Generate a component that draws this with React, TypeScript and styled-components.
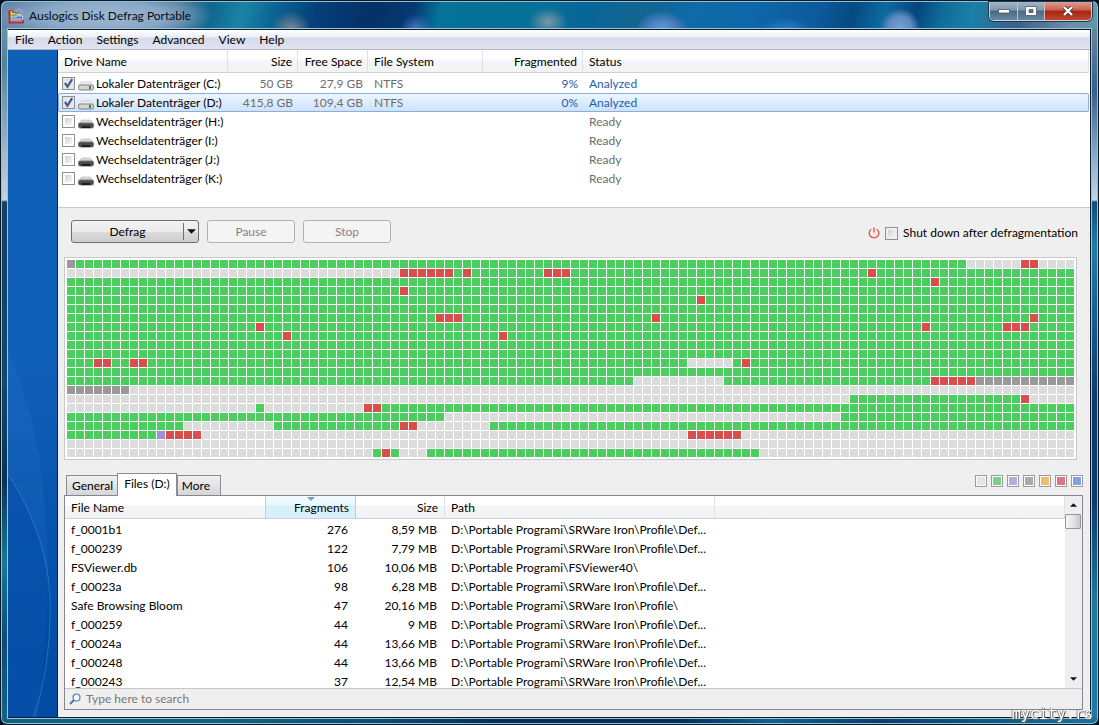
import React from "react";
import styled, { createGlobalStyle } from "styled-components";

const Global = createGlobalStyle`
  * { box-sizing: border-box; }
  html, body { margin: 0; height: 100%; }
  body {
    background: #04121f;
    font-family: Lato, "Open Sans", sans-serif;
    font-size: 12px;
    line-height: 18px;
    color: #000;
  }
  button, input { font: inherit; color: inherit; }
  ul { list-style: none; margin: 0; padding: 0; }
  table { border-collapse: separate; border-spacing: 0; }
`;

const WindowFrame = styled.div`
  display: flex;
  flex-direction: column;
  height: 100vh;
  min-height: 600px;
  padding: 0 7px 6px;
  border: 1px solid #061826;
  border-radius: 7px;
  box-shadow: inset 0 0 0 1px #8fc3d4;
  overflow: hidden;
  background:
    linear-gradient(90deg, #12617f 0, #12617f 20%, #0f4a72 35%, #072c5c 45%, #072c5c 62%, #14628c 70%, #0b3d6d 80%, #1a7196 100%) bottom / 100% 7px no-repeat,
    linear-gradient(180deg, #7fa3bd 0, #53819c 60px, #a9bccb 160px, #c3d3e0 199px, #123f66 201px, #10496a 380px, #0b3354 480px, #157a93 560px, #0d4c74 640px, #146487 100%) left / 8px 100% no-repeat,
    linear-gradient(180deg, #6fa2ae 0, #63869f 30px, #355f8d 90px, #8fb0cd 160px, #c2d5e6 199px, #0f4d7e 201px, #1d7ea8 245px, #0c3a70 400px, #0c3b72 500px, #1b789f 600px, #1a7ba3 100%) right / 8px 100% no-repeat,
    #0c4a78;
`;

const TitleBar = styled.header`
  display: flex;
  align-items: center;
  flex: none;
  height: 27px;
  margin: 1px -6px 0;
  padding-left: 6px;
  border-radius: 6px 6px 0 0;
  background:
    radial-gradient(ellipse 112px 26px at 100px 14px, #9db8d2 0, #8aa8c6 55%, #8aa8c600 100%),
    radial-gradient(ellipse 20px 18px at 289px 27px, #7d8794 0, #7d879400 100%),
    radial-gradient(circle 16px at 414px 28px, #4a79c4 0, #4a79c400 100%),
    radial-gradient(ellipse 20px 14px at 546px 20px, #7a98a5 0, #7a98a500 100%),
    radial-gradient(ellipse 26px 18px at 660px 27px, #5d9ce0 0, #4d7fbe 50%, #4d7fbe00 100%),
    radial-gradient(ellipse 26px 12px at 784px 28px, #2a7fd0 0, #2a7fd000 100%),
    radial-gradient(circle 20px at 898px 26px, #7b9fd4 0, #5c89be 60%, #5c89be00 100%),
    linear-gradient(105deg, #5f86a5 0, #4a7596 170px, #0d6890 205px, #1d83a6 235px, #0b6593 265px, #06407a 305px, #053066 360px, #053a72 400px, #057298 425px, #067097 530px, #07669a 560px, #146590 620px, #0e6aa8 670px, #0e67a8 730px, #0d5a9c 790px, #064a82 825px, #0d6aa2 855px, #07447c 885px, #0f6a98 910px, #1a80a8 940px, #3c5f86 985px, #6f8fab 1040px, #5d99a6 100%);
`;

const AppTitle = styled.h1`
  flex: 1;
  margin: 0 0 0 5px;
  font-size: 12px;
  font-weight: 400;
  line-height: 18px;
  color: #050c14;
`;

const Caption = styled.div`
  display: flex;
  align-self: flex-start;
  height: 19px;
  margin-right: 5px;
  border: 1px solid #c2d3de;
  border-top: 0;
  border-radius: 0 0 5px 5px;
  overflow: hidden;
  box-shadow: 0 0 0 1px #1e3850;
`;

const CaptionButton = styled.button<{ $close?: boolean }>`
  display: grid;
  place-items: center;
  width: ${(p) => (p.$close ? 47 : 27)}px;
  padding: 0;
  border: 0;
  border-left: 1px solid ${(p) => (p.$close ? "#e0b5ae" : "#b6c8d5")};
  background: ${(p) =>
    p.$close
      ? "linear-gradient(#d9a092 0, #c8614c 45%, #a82411 50%, #c4452b 100%)"
      : "linear-gradient(#a3b5c5 0, #7f98ad 45%, #476986 50%, #6689a2 100%)"};
  &:first-child { border-left: 0; }
`;

const Client = styled.div`
  display: flex;
  flex-direction: column;
  flex: 1;
  min-height: 0;
  border: 1px solid #0c1c2c;
  border-width: 1px 1px 1px 0;
  box-shadow: 0 0 0 1px #9cc4d6;
  background: #efefef;
`;

const MenuBar = styled.nav`
  flex: none;
  height: 20px;
  border-bottom: 1px solid #b4b8c6;
  background: linear-gradient(#fff 0, #eceef6 7px, #d5daeb 8px, #e0e4f1 100%);
  ul { display: flex; }
`;

const MenuItem = styled.button`
  height: 19px;
  padding: 0 7px;
  border: 0;
  background: none;
  line-height: 19px;
`;

const Body = styled.div`
  display: flex;
  flex: 1;
  min-height: 0;
`;

const Sidebar = styled.aside`
  flex: none;
  width: 50px;
  border-right: 1px solid #051d42;
  background: linear-gradient(#1160b8 0, #1160b8 45%, #0652aa 75%, #024ba3 100%);
  svg { display: block; width: 100%; height: 100%; }
`;

const Main = styled.main`
  display: flex;
  flex-direction: column;
  flex: 1;
  min-width: 0;
`;

const DriveList = styled.section`
  flex: none;
  height: 158px;
  padding-right: 1px;
  border-bottom: 1px solid #c6c6c6;
  background: #fff;
`;

const HeadCell = styled.th<{ $w?: number; $right?: boolean; $sorted?: boolean }>`
  position: relative;
  width: ${(p) => (p.$w ? p.$w + "px" : "auto")};
  height: 23px;
  padding: 2px 5px 0 6px;
  font-weight: 400;
  text-align: ${(p) => (p.$right ? "right" : "left")};
  white-space: nowrap;
  border-right: 1px solid ${(p) => (p.$sorted ? "#96d9f9" : "#dfe1e4")};
  border-bottom: 1px solid #d0d0d0;
  background: ${(p) =>
    p.$sorted
      ? "linear-gradient(#f2fbff 0, #e9f7fe 40%, #d7effa 45%, #d9f1fb 100%)"
      : "linear-gradient(#fff 0, #fff 40%, #f5f6f8 45%, #f1f2f4 100%)"};
  &:has(+ th > svg) { border-right-color: #96d9f9; }
`;

const SortMark = styled.svg`
  position: absolute;
  top: 1px;
  left: 41px;
`;

const Cell = styled.td<{ $right?: boolean; $tone?: "muted" | "link" }>`
  height: 19px;
  padding: 0 5px 0 6px;
  overflow: hidden;
  white-space: nowrap;
  line-height: 19px;
  text-align: ${(p) => (p.$right ? "right" : "left")};
  color: ${(p) => (p.$tone === "muted" ? "#6d6d6d" : p.$tone === "link" ? "#1b5fa8" : "#000")};
`;

const Row = styled.tr<{ $selected?: boolean }>`
  ${(p) =>
    p.$selected &&
    "background: linear-gradient(#eef6ff, #cbe2fb); outline: 1px solid #8cb0d4; outline-offset: -1px; border-radius: 2px;"}
`;

const DataTable = styled.table`
  width: 100%;
  table-layout: fixed;
  tbody::before { content: ""; display: block; height: 1px; }
`;

const DriveLabel = styled.label`
  display: flex;
  align-items: center;
  height: 19px;
  margin-left: -2px;
  svg { flex: none; margin: 5px 2px 0 3px; }
`;

const Check = styled.input`
  appearance: none;
  flex: none;
  width: 13px;
  height: 13px;
  margin: 0;
  border: 1px solid #8e8f8f;
  background: linear-gradient(135deg, #cfd3d8, #f6f6f6) content-box #f4f4f4;
  padding: 2px;
  &:checked {
    background:
      url("data:image/svg+xml,%3Csvg xmlns='http://www.w3.org/2000/svg' viewBox='0 0 11 11'%3E%3Cpath d='M2.5 5 L4.6 8.3 L8.6 1.8' fill='none' stroke='%23425594' stroke-width='1.8'/%3E%3C/svg%3E") border-box,
      #e4e7ec;
  }
`;

const Toolbar = styled.div`
  display: flex;
  align-items: center;
  gap: 8px;
  flex: none;
  height: 49px;
  padding: 0 12px 2px 13px;
`;

const SplitButton = styled.div`
  display: flex;
  width: 128px;
  height: 23px;
  border: 1px solid #707070;
  border-radius: 3px;
  overflow: hidden;
  background: linear-gradient(#f3f3f3 0, #ebebeb 50%, #dcdcdc 51%, #cdcdcd 100%);
  button { padding: 0; border: 0; background: none; }
`;

const DefragButton = styled.button`
  flex: 1;
`;

const ArrowButton = styled.button`
  display: grid;
  place-items: center;
  width: 15px;
  margin: 2px 0;
  && { border-left: 1px solid #707070; }
`;

const PlainButton = styled.button`
  width: 88px;
  height: 23px;
  padding: 0;
  border: 1px solid #adb2b5;
  border-radius: 3px;
  background: #f4f4f4;
  &:disabled { color: #838383; }
`;

const ShutdownOption = styled.label`
  display: flex;
  align-items: center;
  gap: 5px;
  margin: 3px 0 0 auto;
`;

const ClusterMap = styled.div`
  display: grid;
  flex: none;
  grid-template-columns: repeat(auto-fill, 8px);
  grid-auto-rows: 8px;
  gap: 1px;
  margin: 0 13px 0 6px;
  padding: 2px;
  border: 1px solid #c8c8c8;
  background: #fff;
`;

const clusterColors: Record<string, string> = {
  g: "#4bce5f",
  r: "#d94d4d",
  f: "#dcdcdc",
  s: "#999999",
  v: "#9f8fd3",
};

const Cluster = styled.i<{ $kind: string }>`
  background: ${(p) => clusterColors[p.$kind]};
`;

const TabStrip = styled.div`
  display: flex;
  align-items: flex-end;
  flex: none;
  height: 35px;
  margin: 0 7px 0 8px;
`;

const Tab = styled.button<{ $active?: boolean }>`
  position: relative;
  height: ${(p) => (p.$active ? 23 : 20)}px;
  margin-bottom: ${(p) => (p.$active ? -1 : 0)}px;
  padding: ${(p) => (p.$active ? "0 6px 2px" : "0 4px")};
  border: 1px solid #898c95;
  border-bottom: 0;
  background: ${(p) => (p.$active ? "#fff" : "linear-gradient(#f0f0f0, #d6d6d6)")};
  & + & { border-left-width: ${(p) => (p.$active ? 1 : 0)}px; }
  &:first-child { border-right: 0; padding-left: 5px; }
  &:last-of-type { padding-right: 10px; }
`;

const Legend = styled.ul`
  display: flex;
  gap: 4px;
  && { margin: 0 0 8px auto; }
`;

const Swatch = styled.li<{ $color: string }>`
  width: 12px;
  height: 12px;
  border: 1px solid #9b9b9b;
  box-shadow: inset 0 0 0 1px #fff;
  background: ${(p) => p.$color};
`;

const FilePanel = styled.section`
  display: flex;
  flex-direction: column;
  flex: 1;
  min-height: 0;
  margin: 0 7px 7px 6px;
  border: 1px solid #828790;
  background: #fff;
`;

const FileScroller = styled.div`
  display: flex;
  flex: 1;
  min-height: 0;
`;

const FileTableWrap = styled.div`
  flex: 1;
  min-width: 0;
  overflow: hidden;
  th { padding-right: 6px; }
  td { padding-right: 8px; }
`;

const ScrollTrack = styled.div`
  display: flex;
  flex-direction: column;
  width: 17px;
  padding-right: 1px;
  background: #efefef;
`;

const ScrollArrow = styled.button<{ $end?: boolean }>`
  display: grid;
  place-items: center;
  height: 18px;
  margin-top: ${(p) => (p.$end ? "auto" : 0)};
  padding: 0;
  border: 0;
  background: none;
`;

const ScrollThumb = styled.div`
  height: 15px;
  border: 1px solid #979797;
  border-radius: 1px;
  background: linear-gradient(90deg, #f5f5f5, #e5e5e5 50%, #c8c8cc);
`;

const SearchBar = styled.label`
  display: flex;
  align-items: center;
  flex: none;
  gap: 5px;
  height: 21px;
  padding-left: 4px;
  border-top: 1px solid #c6c6c6;
  background: #efefef;
`;

const SearchInput = styled.input`
  flex: 1;
  height: 18px;
  padding: 0;
  border: 0;
  background: none;
  &::placeholder { color: #777; opacity: 1; }
`;

const Watermark = styled.div`
  position: fixed;
  right: 6px;
  bottom: 1px;
  font: 15px/20px "DejaVu Sans Mono", monospace;
  color: #fff;
  text-shadow: 1px 1px 0 #666, -1px 0 0 #888;
`;

const drives = [
  { name: "Lokaler Datenträger (C:)", size: "50 GB", free: "27,9 GB", fs: "NTFS", frag: "9%", status: "Analyzed" },
  { name: "Lokaler Datenträger (D:)", size: "415,8 GB", free: "109,4 GB", fs: "NTFS", frag: "0%", status: "Analyzed", selected: true },
  { name: "Wechseldatenträger (H:)", status: "Ready" },
  { name: "Wechseldatenträger (I:)", status: "Ready" },
  { name: "Wechseldatenträger (J:)", status: "Ready" },
  { name: "Wechseldatenträger (K:)", status: "Ready" },
];

const profileDir = "D:\\Portable Programi\\SRWare Iron\\Profile\\";
const files = [
  ["f_0001b1", "276", "8,59 MB", profileDir + "Def..."],
  ["f_000239", "122", "7,79 MB", profileDir + "Def..."],
  ["FSViewer.db", "106", "10,06 MB", "D:\\Portable Programi\\FSViewer40\\"],
  ["f_00023a", "98", "6,28 MB", profileDir + "Def..."],
  ["Safe Browsing Bloom", "47", "20,16 MB", profileDir],
  ["f_000259", "44", "9 MB", profileDir + "Def..."],
  ["f_00024a", "44", "13,66 MB", profileDir + "Def..."],
  ["f_000248", "44", "13,66 MB", profileDir + "Def..."],
  ["f_000243", "37", "12,54 MB", profileDir + "Def..."],
];

// Run lengths of cluster kinds: g used, r fragmented, f free, s system, v directory
const clusterRuns = [
  "s1 g99 f6 r2 f4",
  "f37 r6 g1 r1 g8 r3 g33 r1 g22",
  "g96 r1 g15",
  "g37 r1 g74",
  "g70 r1 g41",
  "g112",
  "g41 r3 g21 r1 g41 r1 g4",
  "g21 r1 g73 r1 g8 r3 g5",
  "g24 r1 g23 r1 g63",
  "g112",
  "g112",
  "g3 r2 g2 r2 g60 f5 g1 r1 g36",
  "g112",
  "g63 f10 g23 r5 s11",
  "s7 f105",
  "f87 g19 r1 f5",
  "f21 g1 f11 r2 g77",
  "g42 f44 g26",
  "g13 f10 g14 r2 f8 g65",
  "g10 v1 r4 f54 r6 f37",
  "f112",
  "f34 g1 r1 g1 f3 g37 f35",
];
const clusters = clusterRuns
  .join(" ")
  .split(" ")
  .flatMap((run) => Array<string>(Number(run.slice(1))).fill(run[0]));

const legend: [string, string][] = [
  ["Free", "#e4e4e4"],
  ["Used", "#7bcf8a"],
  ["Directory", "#b5acda"],
  ["System", "#ababab"],
  ["Processing", "#eebc6c"],
  ["Fragmented", "#dc7780"],
  ["Defragmented", "#84a0e0"],
];

const AppIcon = () => (
  <svg width="16" height="16" viewBox="0 0 16 16" aria-hidden="true">
    <path d="M1 2.5h3.500v2H8V7H1z" fill="#f6c04c" stroke="#d0352a" />
    <path d="M3 5.500h4l1 1h5v3H3z" fill="#5fc24e" stroke="#e8f6e4" strokeWidth=".6" />
    <path d="M3 9h5l1-1h5.500v5H3z" fill="#5a6fe0" stroke="#fff" strokeWidth=".6" />
    <path d="M4 11h9" stroke="#f0e070" strokeWidth="1.200" />
    <path d="M1.500 3v11.500H15V12" fill="none" stroke="#c4262c" strokeWidth="1.800" />
    <path d="M7 3.500L11 1l2 3M14 2v4" fill="none" stroke="#b893ea" strokeWidth="1.300" />
  </svg>
);

const DriveIcon = ({ removable }: { removable: boolean }) => (
  <svg width="16" height="10" viewBox="0 0 16 10" aria-hidden="true">
    <path d="M3.5 1h9L15 4.5H1z" fill={removable ? "#d7d7d7" : "#f1f1f1"} stroke="#b9b9b9" strokeWidth=".6" />
    <rect x=".5" y="4" width="15" height="5" rx="1.6" fill={removable ? "#4b4b4d" : "#d5d5d5"} stroke={removable ? "#77787b" : "#7d7d7d"} />
    {removable ? (
      <path d="M3 9l1.5-2h7L13 9z" fill="#1f1f21" />
    ) : (
      <rect x="11" y="5" width="2" height="3" fill="#4c7a50" />
    )}
  </svg>
);

const Triangle = ({ size, up }: { size: number; up?: boolean }) => (
  <svg width={size} height={Math.ceil(size / 2)} viewBox="0 0 10 5" aria-hidden="true">
    <path d={up ? "M0 5L5 0l5 5z" : "M0 0h10L5 5z"} fill="#111" />
  </svg>
);

export default function App() {
  return (
    <>
      <Global />
      <WindowFrame>
        <TitleBar>
          <AppIcon />
          <AppTitle>Auslogics Disk Defrag Portable</AppTitle>
          <Caption>
            <CaptionButton aria-label="Minimize">
              <svg width="12" height="6" viewBox="0 0 12 6"><rect x=".5" y="1.5" width="11" height="3.5" fill="#fff" stroke="#4b5a68" strokeWidth=".8" /></svg>
            </CaptionButton>
            <CaptionButton aria-label="Maximize">
              <svg width="12" height="10" viewBox="0 0 12 10"><path d="M.5.5h11v9H.5zM4 3.500v3h4v-3z" fill="#fff" fillRule="evenodd" stroke="#4b5a68" strokeWidth=".8" /></svg>
            </CaptionButton>
            <CaptionButton $close aria-label="Close">
              <svg width="12" height="10" viewBox="0 0 12 10"><path d="M2 1l8 8M10 1L2 9" stroke="#5e2a24" strokeWidth="4" /><path d="M2 1l8 8M10 1L2 9" stroke="#fff" strokeWidth="2.4" /></svg>
            </CaptionButton>
          </Caption>
        </TitleBar>
        <Client>
          <MenuBar>
            <ul>
              {["File", "Action", "Settings", "Advanced", "View", "Help"].map((m) => (
                <li key={m}><MenuItem>{m}</MenuItem></li>
              ))}
            </ul>
          </MenuBar>
          <Body>
            <Sidebar>
              <svg viewBox="0 0 50 667" preserveAspectRatio="none" aria-hidden="true">
                <path d="M0 300Q30 370 36 440Q48 540 30 667H0z" fill="#2a78cc" opacity=".22" />
                <path d="M0 424Q44 490 43 560Q43 620 26 667H0z" fill="#0046a0" opacity=".4" />
                <path d="M0 424Q44 490 43 560Q43 620 26 667" fill="none" stroke="#4a90d8" opacity=".5" />
              </svg>
            </Sidebar>
            <Main>
              <DriveList>
                <DataTable>
                  <thead>
                    <tr>
                      <HeadCell $w={170}>Drive Name</HeadCell>
                      <HeadCell $w={70} $right>Size</HeadCell>
                      <HeadCell $w={70} $right>Free Space</HeadCell>
                      <HeadCell $w={115}>File System</HeadCell>
                      <HeadCell $w={100} $right>Fragmented</HeadCell>
                      <HeadCell>Status</HeadCell>
                    </tr>
                  </thead>
                  <tbody>
                    {drives.map((d) => (
                      <Row key={d.name} $selected={d.selected}>
                        <Cell>
                          <DriveLabel>
                            <Check type="checkbox" defaultChecked={!!d.size} />
                            <DriveIcon removable={!d.size} />
                            {d.name}
                          </DriveLabel>
                        </Cell>
                        <Cell $right $tone="muted">{d.size}</Cell>
                        <Cell $right $tone="muted">{d.free}</Cell>
                        <Cell $tone="muted">{d.fs}</Cell>
                        <Cell $right $tone="link">{d.frag}</Cell>
                        <Cell $tone={d.size ? "link" : "muted"}>{d.status}</Cell>
                      </Row>
                    ))}
                  </tbody>
                </DataTable>
              </DriveList>
              <Toolbar>
                <SplitButton>
                  <DefragButton>Defrag</DefragButton>
                  <ArrowButton aria-label="Defrag options"><Triangle size={9} /></ArrowButton>
                </SplitButton>
                <PlainButton disabled>Pause</PlainButton>
                <PlainButton disabled>Stop</PlainButton>
                <ShutdownOption>
                  <svg width="12" height="12" viewBox="0 0 12 12" aria-hidden="true">
                    <path d="M3.2 2.2a4.8 4.8 0 1 0 5.6 0M6 .5v5" fill="none" stroke="#e2603f" strokeWidth="1.4" />
                  </svg>
                  <Check type="checkbox" />
                  Shut down after defragmentation
                </ShutdownOption>
              </Toolbar>
              <ClusterMap role="img" aria-label="Cluster map">
                {clusters.map((kind, i) => <Cluster key={i} $kind={kind} />)}
              </ClusterMap>
              <TabStrip>
                <Tab>General</Tab>
                <Tab $active>Files (D:)</Tab>
                <Tab>More</Tab>
                <Legend>
                  {legend.map(([name, color]) => <Swatch key={name} $color={color} title={name} />)}
                </Legend>
              </TabStrip>
              <FilePanel>
                <FileScroller>
                  <FileTableWrap>
                    <DataTable>
                      <thead>
                        <tr>
                          <HeadCell $w={201}>File Name</HeadCell>
                          <HeadCell $w={90} $right $sorted>
                            <SortMark width="8" height="4" viewBox="0 0 8 4" aria-hidden="true"><path d="M0 0h8L4 4z" fill="#6ea3bd" /></SortMark>
                            Fragments
                          </HeadCell>
                          <HeadCell $w={89} $right>Size</HeadCell>
                          <HeadCell $w={270}>Path</HeadCell>
                          <HeadCell />
                        </tr>
                      </thead>
                      <tbody>
                        {files.map(([name, frags, size, path]) => (
                          <Row key={name}>
                            <Cell>{name}</Cell>
                            <Cell $right>{frags}</Cell>
                            <Cell $right>{size}</Cell>
                            <Cell>{path}</Cell>
                            <Cell />
                          </Row>
                        ))}
                      </tbody>
                    </DataTable>
                  </FileTableWrap>
                  <ScrollTrack>
                    <ScrollArrow aria-label="Scroll up"><Triangle size={7} up /></ScrollArrow>
                    <ScrollThumb />
                    <ScrollArrow $end aria-label="Scroll down"><Triangle size={7} /></ScrollArrow>
                  </ScrollTrack>
                </FileScroller>
                <SearchBar>
                  <svg width="12" height="12" viewBox="0 0 12 12" aria-hidden="true">
                    <circle cx="7.5" cy="4.5" r="3.5" fill="#f4faff" stroke="#4a7fc0" strokeWidth="1.2" />
                    <path d="M5 7L1 11" stroke="#3f6fb0" strokeWidth="1.8" />
                  </svg>
                  <SearchInput aria-label="Search files" placeholder="Type here to search" />
                </SearchBar>
              </FilePanel>
            </Main>
          </Body>
        </Client>
      </WindowFrame>
      <Watermark>mycity.rs</Watermark>
    </>
  );
}
